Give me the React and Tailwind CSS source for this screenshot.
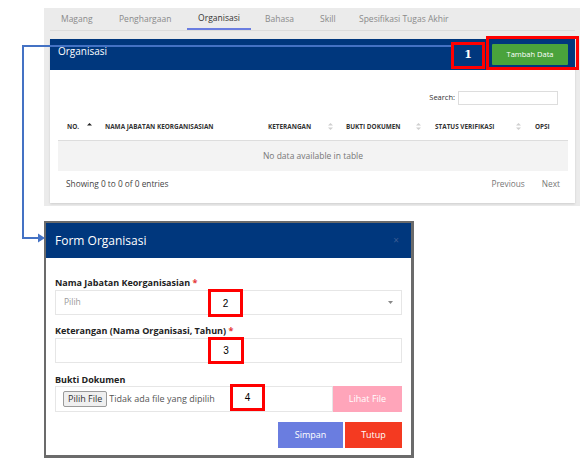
import React from "react";

function SortIcon({ active }) {
  return (
    <svg width="5" height="7" viewBox="0 0 5 7">
      <path d="M2.5 0 L5 2.6 H0 Z" fill={active ? "#222" : "#cfcfcf"} />
      <path d="M2.5 7 L5 4.4 H0 Z" fill={active ? "#ffffff" : "#cfcfcf"} />
    </svg>
  );
}

export default function App() {
  return (
    <div className="relative w-[586px] h-[460px] bg-white overflow-hidden font-['Open_Sans',sans-serif]">
      {/* Top screenshot */}
      <div className="ml-[44px] mt-[8px] w-[536px] h-[198px] bg-[#ebebeb] flex flex-col">
        <div className="flex h-[22px] text-[8.5px] text-[#8a8a8a] pl-[17px]">
          <div className="w-[58px] flex items-center">Magang</div>
          <div className="w-[68px] flex items-center">Penghargaan</div>
          <div className="w-[64px] flex items-center justify-center text-[#333] border-b-2 border-[#6a7de0]">Organisasi</div>
          <div className="w-[69px] flex items-center pl-[14px]">Bahasa</div>
          <div className="w-[39px] flex items-center">Skill</div>
          <div className="flex items-center">Spesifikasi Tugas Akhir</div>
        </div>
        <div className="ml-[6px] mr-[5px] h-px bg-[#dcdcdc]" />
        <div className="ml-[6px] mt-[8px] w-[525px] h-[164px] bg-white shadow-[0_1px_2px_rgba(0,0,0,0.12)] flex flex-col">
          <div className="h-[31px] bg-[#00377d] flex items-start justify-between">
            <div className="text-white text-[10px] pl-[8px] pt-[5px]">Organisasi</div>
            <div className="mt-[5px] mr-[7px] w-[76px] h-[21px] bg-[#4aa33c] text-white text-[7.5px] flex items-center justify-center rounded-[1px]">
              Tambah Data
            </div>
          </div>
          <div className="flex-1 flex flex-col">
            <div className="mt-[21px] h-[14px] flex items-center justify-end pr-[17px] text-[7.5px] text-[#333]">
              <span className="mr-[3px]">Search:</span>
              <div className="w-[100px] h-[14px] border border-[#dddddd]" />
            </div>
            <div className="ml-[8px] mr-[7px] mt-[8px]">
              <div className="h-[28px] flex items-center border-b border-[#dddddd] text-[6.4px] font-bold text-[#333]">
                <div className="w-[39px] flex items-center justify-between pl-[9px] pr-[5px]">
                  <span>NO.</span>
                  <SortIcon active />
                </div>
                <div className="w-[163px] pl-[8px]">NAMA JABATAN KEORGANISASIAN</div>
                <div className="w-[78px] flex items-center justify-between pl-[8px] pr-[5px]">
                  <span>KETERANGAN</span>
                  <SortIcon />
                </div>
                <div className="w-[89px] flex items-center justify-between pl-[8px] pr-[6px]">
                  <span>BUKTI DOKUMEN</span>
                  <SortIcon />
                </div>
                <div className="w-[100px] flex items-center justify-between pl-[8px] pr-[6px]">
                  <span>STATUS VERIFIKASI</span>
                  <SortIcon />
                </div>
                <div className="pl-[8px]">OPSI</div>
              </div>
              <div className="h-[30px] bg-[#f3f3f3] flex items-center justify-center text-[8.5px] text-[#777]">
                No data available in table
              </div>
              <div className="h-[26px] flex items-center justify-between text-[8.3px] text-[#444]">
                <span className="pl-[8px]">Showing 0 to 0 of 0 entries</span>
                <div className="flex items-center text-[#777] pr-[8px]">
                  <span>Previous</span>
                  <span className="ml-[17px]">Next</span>
                </div>
              </div>
            </div>
          </div>
        </div>
      </div>

      {/* Modal screenshot */}
      <div className="ml-[44px] mt-[15px] w-[370px] h-[237px] border-l-2 border-r-[3px] border-t-2 border-b-[3px] border-[#6b6b6b] bg-white flex flex-col">
        <div className="h-[35px] bg-[#00377d] flex items-center justify-between px-[9px]">
          <span className="text-white text-[12px]">Form Organisasi</span>
          <span className="text-[#3a5c94] text-[10px] mr-[3px]">×</span>
        </div>
        <div className="px-[9px] pt-[18px] flex flex-col">
          <div className="text-[9px] font-bold text-[#222] leading-[13px]">
            Nama Jabatan Keorganisasian <span className="text-[#e53935]">*</span>
          </div>
          <div className="mt-[1px] h-[25px] border border-[#e6e6e6] flex items-center justify-between px-[8px] text-[8.5px] text-[#9a9a9a]">
            <span>Pilih</span>
            <svg width="5" height="3" viewBox="0 0 5 3"><path d="M0 0 H5 L2.5 3 Z" fill="#888" /></svg>
          </div>
          <div className="mt-[9px] text-[9px] font-bold text-[#222] leading-[13px]">
            Keterangan (Nama Organisasi, Tahun) <span className="text-[#e53935]">*</span>
          </div>
          <div className="mt-[1px] h-[25px] border border-[#e6e6e6]" />
          <div className="mt-[10px] text-[9px] font-bold text-[#222] leading-[13px]">Bukti Dokumen</div>
          <div className="h-[26px] flex">
            <div className="flex-1 border border-[#e6e6e6] flex items-center pl-[7px] text-[9px] text-[#555]">
              <span className="h-[16px] px-[4px] border border-[#9a9a9a] bg-[#efefef] rounded-[2px] flex items-center text-[#333]">Pilih File</span>
              <span className="ml-[2px]">Tidak ada file yang dipilih</span>
            </div>
            <div className="w-[69px] bg-[#ffa5ba] text-white text-[9px] flex items-center justify-center">Lihat File</div>
          </div>
          <div className="mt-[10px] flex justify-end gap-[2px]">
            <div className="w-[65px] h-[26px] bg-[#6a7de0] text-white text-[9px] flex items-center justify-center">Simpan</div>
            <div className="w-[57px] h-[26px] bg-[#f43a21] text-white text-[9px] flex items-center justify-center">Tutup</div>
          </div>
        </div>
      </div>

      {/* Annotation arrow */}
      <svg className="absolute left-0 top-0 pointer-events-none" width="586" height="460">
        <polyline points="452,46 23,46 23,238 39,238" fill="none" stroke="#4472c4" strokeWidth="2" />
        <path d="M38 233.5 L45 238 L38 242.5 Z" fill="#4472c4" />
      </svg>

      {/* Red annotation boxes */}
      <div className="absolute left-[451px] top-[42px] w-[34px] h-[27px] border-[3px] border-[#ff0000] bg-[#00377d] flex items-center justify-center text-white font-bold text-[11px] font-['DejaVu_Serif',serif]">1</div>
      <div className="absolute left-[486px] top-[36px] w-[93px] h-[34px] border-[3px] border-[#ff0000]" />
      <div className="absolute left-[208px] top-[289px] w-[35px] h-[28px] border-[3px] border-[#ff0000] bg-white flex items-center justify-center text-[10px] text-black font-['Liberation_Sans',sans-serif]">2</div>
      <div className="absolute left-[208px] top-[337px] w-[36px] h-[27px] border-[3px] border-[#ff0000] bg-white flex items-center justify-center text-[10px] text-black font-['Liberation_Sans',sans-serif]">3</div>
      <div className="absolute left-[230px] top-[384px] w-[35px] h-[27px] border-[3px] border-[#ff0000] bg-white flex items-center justify-center text-[10px] text-black font-['Liberation_Sans',sans-serif]">4</div>
    </div>
  );
}
